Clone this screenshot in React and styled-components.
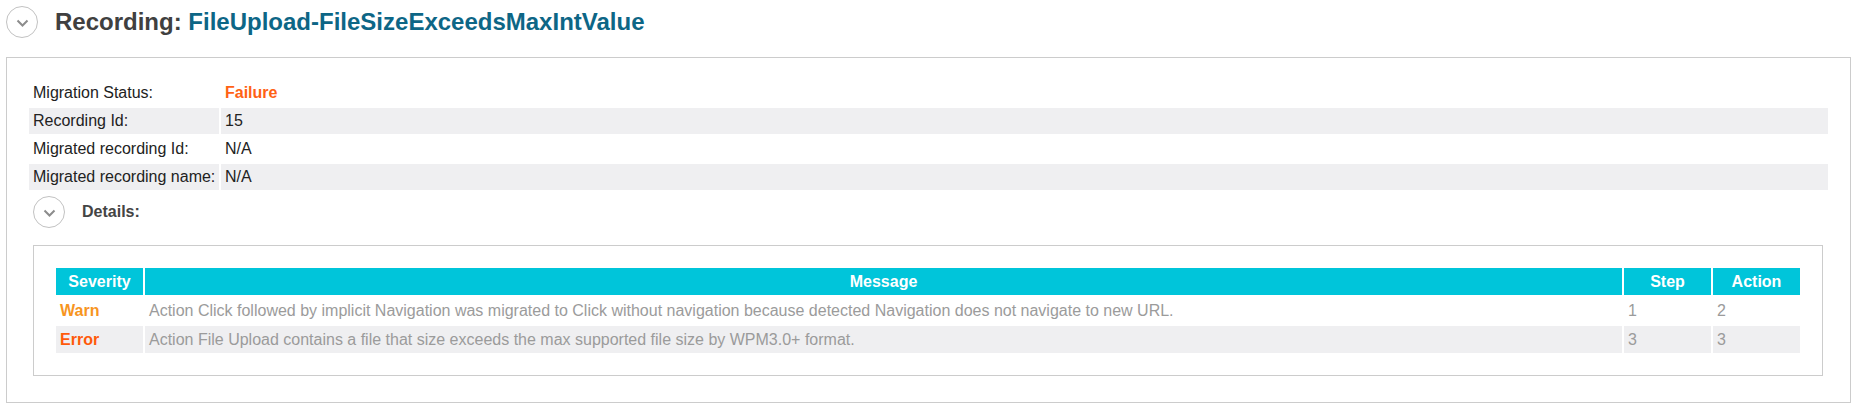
import styled, { createGlobalStyle } from "styled-components";

const info = [
  { label: "Migration Status:", value: "Failure", status: true },
  { label: "Recording Id:", value: "15" },
  { label: "Migrated recording Id:", value: "N/A" },
  { label: "Migrated recording name:", value: "N/A" },
];

const messages = [
  {
    severity: "Warn",
    message:
      "Action Click followed by implicit Navigation was migrated to Click without navigation because detected Navigation does not navigate to new URL.",
    step: 1,
    action: 2,
  },
  {
    severity: "Error",
    message:
      "Action File Upload contains a file that size exceeds the max supported file size by WPM3.0+ format.",
    step: 3,
    action: 3,
  },
];

const Toggle = () => (
  <ToggleBtn>
    <svg width="13" height="8" viewBox="0 0 13 8">
      <path d="M1.5 1.5 L6.5 6.5 L11.5 1.5" fill="none" stroke="#8c8c8c" strokeWidth="2" />
    </svg>
  </ToggleBtn>
);

const App = () => {
  return (
    <>
      <GlobalStyle />
      <Page>
        <Header>
          <Toggle />
          <Title>
            Recording: <TitleName>FileUpload-FileSizeExceedsMaxIntValue</TitleName>
          </Title>
        </Header>

        <Panel>
          <InfoTable>
            <colgroup>
              <col style={{ width: "190px" }} />
              <col />
            </colgroup>
            <tbody>
              {info.map((row, i) => (
                <InfoRow key={row.label} $striped={i % 2 === 1}>
                  <InfoCell>{row.label}</InfoCell>
                  <InfoCell>
                    {row.status ? <StatusText>{row.value}</StatusText> : row.value}
                  </InfoCell>
                </InfoRow>
              ))}
            </tbody>
          </InfoTable>

          <Details>
            <DetailsHeader>
              <Toggle />
              <DetailsTitle>Details:</DetailsTitle>
            </DetailsHeader>

            <DetailsBox>
              <MessageTable>
                <colgroup>
                  <col style={{ width: "87px" }} />
                  <col />
                  <col style={{ width: "87px" }} />
                  <col style={{ width: "87px" }} />
                </colgroup>
                <thead>
                  <tr>
                    <HeadCell>Severity</HeadCell>
                    <HeadCell>Message</HeadCell>
                    <HeadCell>Step</HeadCell>
                    <HeadCell>Action</HeadCell>
                  </tr>
                </thead>
                <tbody>
                  {messages.map((m, i) => (
                    <MessageRow key={i} $striped={i % 2 === 1}>
                      <SeverityCell $level={m.severity}>{m.severity}</SeverityCell>
                      <MessageCell>{m.message}</MessageCell>
                      <MessageCell>{m.step}</MessageCell>
                      <MessageCell>{m.action}</MessageCell>
                    </MessageRow>
                  ))}
                </tbody>
              </MessageTable>
            </DetailsBox>
          </Details>
        </Panel>
      </Page>
    </>
  );
};

export default App;

const GlobalStyle = createGlobalStyle`
  body {
    margin: 0;
    background: #ffffff;
    font-family: "Liberation Sans", Arial, sans-serif;
    color: #222222;
  }
`;

const Page = styled.div`
  padding: 6px 7px 8px 6px;
`;

const Header = styled.div`
  display: flex;
  align-items: center;
  gap: 17px;
  height: 32px;
  margin-bottom: 19px;
`;

const ToggleBtn = styled.div`
  width: 32px;
  height: 32px;
  box-sizing: border-box;
  border: 1px solid #c2c2c2;
  border-radius: 50%;
  display: flex;
  align-items: center;
  justify-content: center;
  flex: 0 0 32px;
  padding-top: 2px;
`;

const Title = styled.h1`
  margin: 0;
  font-size: 24px;
  font-weight: bold;
  color: #404040;
  line-height: 32px;
`;

const TitleName = styled.span`
  color: #0d6686;
`;

const Panel = styled.div`
  border: 1px solid #cccccc;
  padding: 20px 20px 26px 20px;
`;

const InfoTable = styled.table`
  width: 100%;
  border-collapse: separate;
  border-spacing: 2px;
  table-layout: fixed;
  font-size: 16px;
  color: #222222;
`;

const InfoRow = styled.tr`
  background: ${(p) => (p.$striped ? "#efeff1" : "transparent")};
`;

const InfoCell = styled.td`
  height: 26px;
  padding: 0 4px;
  box-sizing: border-box;
  white-space: nowrap;
  vertical-align: middle;
`;

const StatusText = styled.span`
  color: #ff6214;
  font-weight: bold;
`;

const Details = styled.div`
  padding: 0 7px 0 6px;
`;

const DetailsHeader = styled.div`
  display: flex;
  align-items: center;
  gap: 17px;
  margin-top: 4px;
  margin-bottom: 17px;
`;

const DetailsTitle = styled.span`
  font-size: 16px;
  font-weight: bold;
  color: #444444;
`;

const DetailsBox = styled.div`
  border: 1px solid #cccccc;
  padding: 20px;
`;

const MessageTable = styled.table`
  width: 100%;
  border-collapse: separate;
  border-spacing: 2px;
  table-layout: fixed;
  font-size: 16px;
`;

const HeadCell = styled.th`
  height: 27px;
  padding: 0 4px;
  background: #00c5da;
  color: #ffffff;
  font-weight: bold;
  text-align: center;
  vertical-align: middle;
`;

const MessageRow = styled.tr`
  background: ${(p) => (p.$striped ? "#efeff1" : "transparent")};
`;

const MessageCell = styled.td`
  height: 27px;
  padding: 0 4px;
  color: #9b9b9b;
  text-align: left;
  vertical-align: middle;
  white-space: nowrap;
  overflow: hidden;
`;

const SeverityCell = styled(MessageCell)`
  font-weight: bold;
  color: ${(p) => (p.$level === "Error" ? "#ff5a0a" : "#f7951f")};
`;
